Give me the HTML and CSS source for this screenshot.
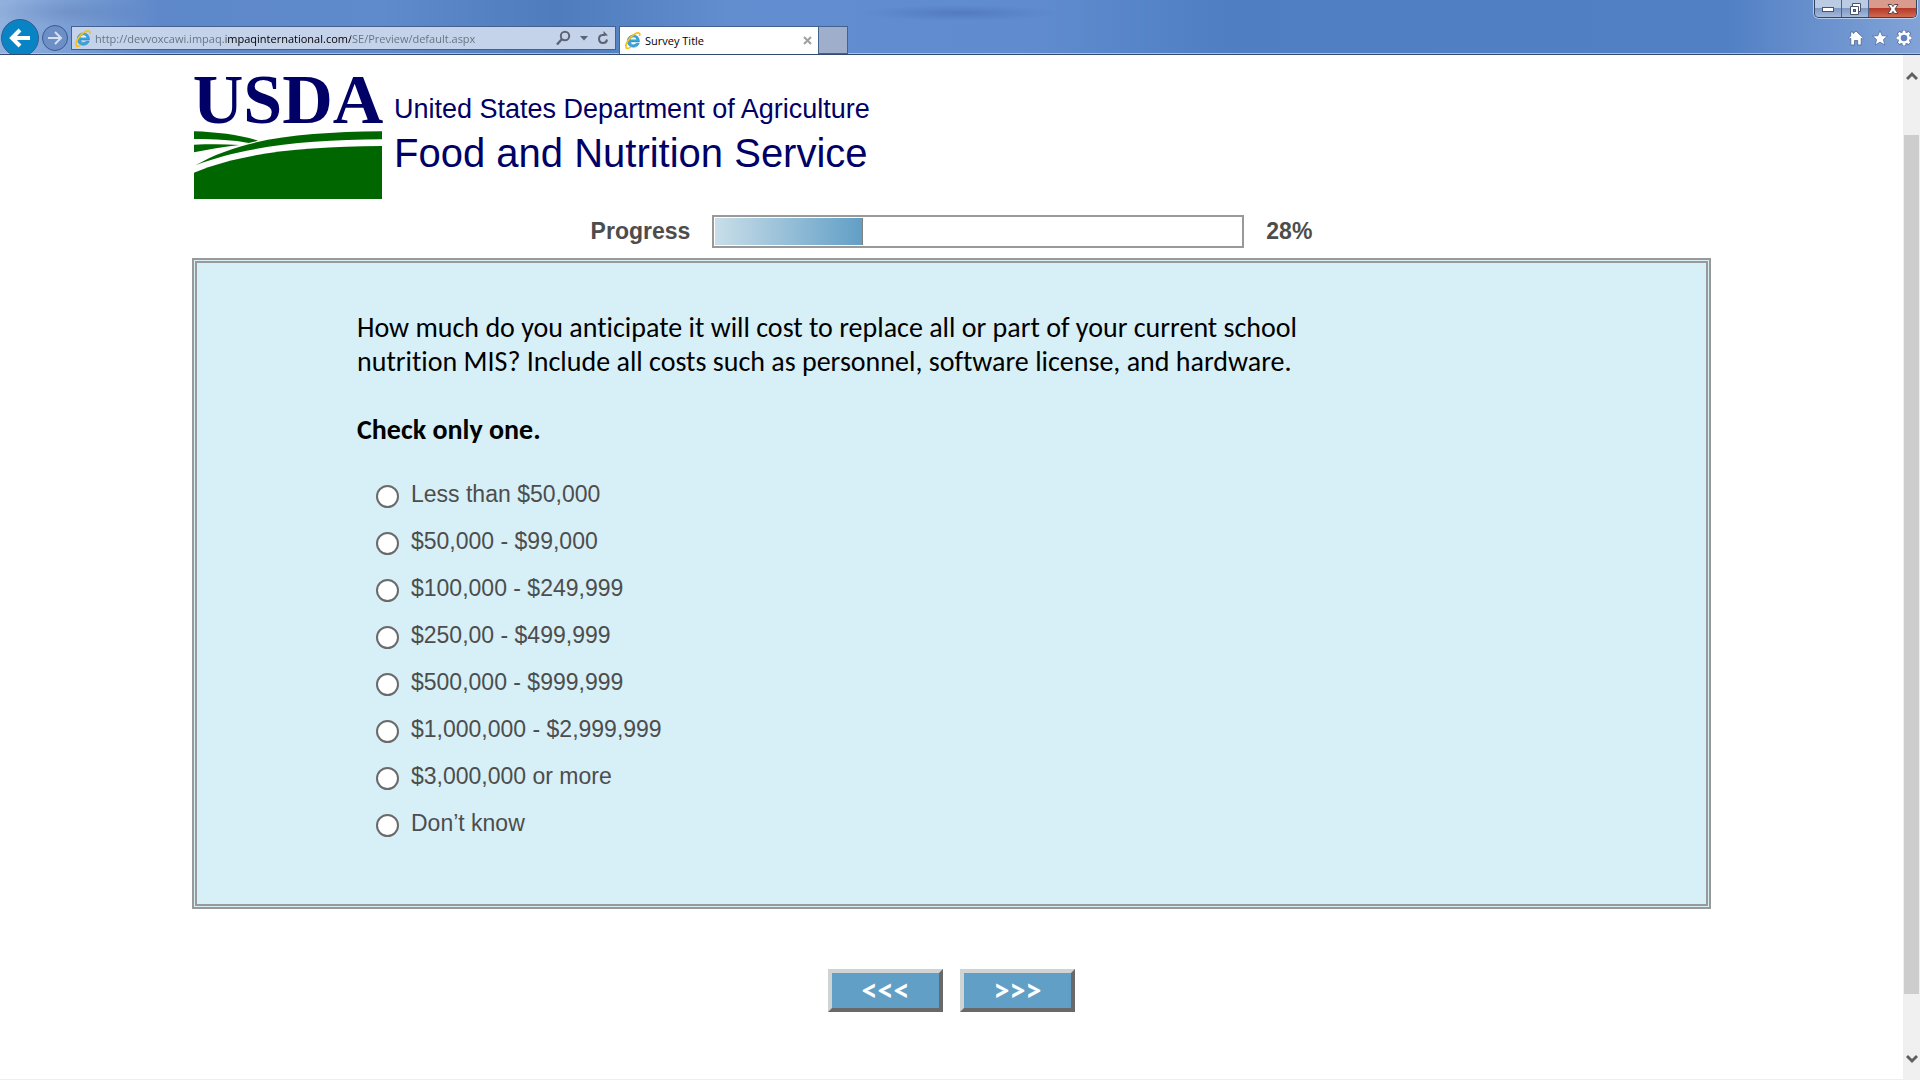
FILE: index.html
```html
<!DOCTYPE html>
<html lang="en">

<head>
  <meta charset="UTF-8">
  <meta name="viewport" content="width=device-width, initial-scale=1.0">
  <title>Survey Title</title>
  <link rel="stylesheet" href="styles.css">
</head>

<body>
  <svg width="0" height="0" class="defs">
    <symbol id="ie" viewBox="0 0 16 16">
      <path d="M13.6 9.3H5.2c.2 3.2 4.2 3.500 5.300 1.400h2.900c-2 5.500-11.200 4.700-11.200-2.200C2.200 1 13.900.5 13.600 9.300z" fill="#3aa5dc" stroke="#1f7fc0" stroke-width=".5"/>
      <path d="M5.300 7.100h5.300c-.2-2.900-4.900-2.900-5.300 0z" fill="#e8f6fd"/>
      <path d="M1.500 15.200C-.8 12.500 4 4.500 9.500 1.700c3-1.500 5-1 4.300 1.400" fill="none" stroke="#f4c01e" stroke-width="1.600" stroke-linecap="round"/>
      <path d="M1.500 15.200c.9.500 2.400 0 3.500-.8" fill="none" stroke="#f4c01e" stroke-width="1.300" stroke-linecap="round"/>
    </symbol>
  </svg>

  <header class="browser">
    <div class="window-buttons">
      <button class="win" aria-label="Minimize">
        <svg width="14" height="8" viewBox="0 0 14 8"><rect x="1.500" y="2.500" width="11" height="4" fill="#fff" stroke="#4a5468"/></svg>
      </button>
      <button class="win" aria-label="Restore">
        <svg width="14" height="14" viewBox="0 0 14 14"><path d="M4.500 1.500h8v8h-2v3h-8v-8h2z" fill="#fff" stroke="#4a5468"/><path d="M4 4.500h6.500V10" fill="none" stroke="#4a5468"/><rect x="5.500" y="7.500" width="2" height="2" fill="#6c82ac" stroke="#4a5468"/></svg>
      </button>
      <button class="win win-close" aria-label="Close">
        <svg width="14" height="12" viewBox="0 0 14 12"><path d="M2 1.500h3.500L7 3.600l1.500-2.100H12L9 6l3 4.500H8.500L7 8.400l-1.500 2.100H2L5 6z" fill="#fff" stroke="#57434c"/></svg>
      </button>
    </div>

    <nav class="bar">
      <button class="round back" aria-label="Back">
        <svg width="24" height="24" viewBox="0 0 24 24"><path d="M12 4l-8 8 8 8M4.500 12H22" fill="none" stroke="#fff" stroke-width="4"/></svg>
      </button>
      <button class="round forward" aria-label="Forward">
        <svg width="16" height="16" viewBox="0 0 16 16"><path d="M8 2l6 6-6 6M1 8h12.500" fill="none" stroke="#d5e0f3" stroke-width="2"/></svg>
      </button>
      <div class="address">
        <svg width="17" height="17"><use href="#ie"/></svg>
        <input class="url" type="text" aria-label="Address" value="http://devvoxcawi.impaq.impaqinternational.com/SE/Preview/default.aspx">
        <button class="tool" aria-label="Search">
          <svg width="15" height="16" viewBox="0 0 15 16"><circle cx="9" cy="6" r="4.200" fill="none" stroke="#5b6472" stroke-width="2"/><path d="M6 9l-5 5.500" stroke="#5b6472" stroke-width="2.400"/></svg>
        </button>
        <button class="tool" aria-label="Search options">
          <svg width="8" height="5" viewBox="0 0 8 5"><path d="M0 0h8L4 4.500z" fill="#5b6472"/></svg>
        </button>
        <button class="tool" aria-label="Refresh">
          <svg width="12" height="14" viewBox="0 0 12 14"><path d="M8 4H5.500a4 4 0 1 0 4.500 4.500" fill="none" stroke="#5b6472" stroke-width="2"/><path d="M6.500 0v4.800L11 4.500z" fill="#5b6472"/></svg>
        </button>
      </div>
      <div class="tab">
        <svg width="17" height="17"><use href="#ie"/></svg>
        <span class="tab-title">Survey Title</span>
        <button class="tool" aria-label="Close tab">
          <svg width="9" height="9" viewBox="0 0 9 9"><path d="M1 1l7 7M8 1L1 8" stroke="#a0a0a0" stroke-width="2"/></svg>
        </button>
      </div>
      <button class="new-tab" aria-label="New tab"></button>
      <div class="bar-icons">
        <button class="tool" aria-label="Home">
          <svg width="16" height="16" viewBox="0 0 16 16"><path d="M8 1l7.300 7-1 1.200-1.100-.9V15H9.700v-4.500H6.500V15H2.800V8.300l-1.100.9L.7 8l2-2V2h2.500v1.600z" fill="#fff" stroke="#4a6596" stroke-width=".8"/></svg>
        </button>
        <button class="tool" aria-label="Favorites">
          <svg width="16" height="16" viewBox="0 0 16 16"><path d="M8 .6l2.100 5.100 5.400.4-4.100 3.500 1.300 5.500L8 12.100l-4.700 3 1.300-5.500L.5 6.100l5.400-.4z" fill="#fff" stroke="#4a6596" stroke-width=".7"/></svg>
        </button>
        <button class="tool" aria-label="Tools">
          <svg width="16" height="16" viewBox="0 0 16 16"><g stroke="#4a6596" stroke-width="4.200"><path d="M8 0v16M0 8h16M2.300 2.300l11.400 11.400M13.700 2.300L2.300 13.700"/></g><g stroke="#fff" stroke-width="2.800"><path d="M8 .5v15M.5 8h15M2.700 2.700l10.600 10.600M13.300 2.700L2.700 13.300"/></g><circle cx="8" cy="8" r="4.500" fill="#5f85c3" stroke="#fff" stroke-width="2.400"/></svg>
        </button>
      </div>
    </nav>
  </header>

  <div class="view">
    <main class="page">
      <div class="brand">
        <svg class="logo" width="192" height="135" viewBox="36 30 576 405">
          <text x="38" y="204" class="logo-text">USDA</text>
          <g fill="#006600">
            <path d="M42 229C110 231 180 240 234 257L206 264C160 255 110 252 42 252z"/>
            <path d="M42 269C90 267 135 267 178 270C130 276 85 283 42 292z"/>
            <path d="M46 331C190 248 370 232 606 229V253C380 254 190 275 46 331z"/>
            <path d="M42 353C180 296 360 274 606 273V432H42z"/>
          </g>
        </svg>
        <div class="brand-names">
          <div class="department">United States Department of Agriculture</div>
          <div class="service">Food and Nutrition Service</div>
        </div>
      </div>

      <div class="progress">
        <span id="progress-label">Progress</span>
        <div class="progress-bar" role="progressbar" aria-labelledby="progress-label" aria-valuenow="28" aria-valuemin="0" aria-valuemax="100">
          <div class="progress-fill" style="width: 28%"></div>
        </div>
        <span>28%</span>
      </div>

      <form class="survey">
        <fieldset class="panel">
          <p class="question" id="question">How much do you anticipate it will cost to replace all or part of your current school nutrition MIS? Include all costs such as personnel, software license, and hardware.</p>
          <p class="question hint">Check only one.</p>
          <div class="options" role="radiogroup" aria-labelledby="question">
            <label class="option"><input type="radio" name="cost" value="1">Less than $50,000</label>
            <label class="option"><input type="radio" name="cost" value="2">$50,000 - $99,000</label>
            <label class="option"><input type="radio" name="cost" value="3">$100,000 - $249,999</label>
            <label class="option"><input type="radio" name="cost" value="4">$250,00 - $499,999</label>
            <label class="option"><input type="radio" name="cost" value="5">$500,000 - $999,999</label>
            <label class="option"><input type="radio" name="cost" value="6">$1,000,000 - $2,999,999</label>
            <label class="option"><input type="radio" name="cost" value="7">$3,000,000 or more</label>
            <label class="option"><input type="radio" name="cost" value="8">Don’t know</label>
          </div>
        </fieldset>
        <div class="buttons">
          <button class="step" type="button">&lt;&lt;&lt;</button>
          <button class="step" type="button">&gt;&gt;&gt;</button>
        </div>
      </form>
    </main>

    <aside class="scrollbar">
      <button class="arrow" aria-label="Scroll up">
        <svg width="12" height="10" viewBox="0 0 12 10"><path d="M1 8l5-5 5 5" fill="none" stroke="#606060" stroke-width="3"/></svg>
      </button>
      <div class="track">
        <div class="thumb"></div>
      </div>
      <button class="arrow" aria-label="Scroll down">
        <svg width="12" height="10" viewBox="0 0 12 10"><path d="M1 2l5 5 5-5" fill="none" stroke="#606060" stroke-width="3"/></svg>
      </button>
    </aside>
  </div>
</body>

</html>
```
FILE: styles.css
```css
*,
*::after,
*::before {
  box-sizing: border-box;
}

body {
  margin: 0;
  min-height: 100vh;
  display: flex;
  flex-direction: column;
  font-family: "Liberation Sans", Arial, sans-serif;
  background-color: #fff;
}

button {
  padding: 0;
  border: none;
  background: none;
  display: flex;
  align-items: center;
  justify-content: center;
}

svg {
  display: block;
  flex: none;
}

.defs {
  position: absolute;
}

/* Browser window */
.browser {
  position: relative;
  height: 55px;
  overflow: hidden;
  border-bottom: 1px solid #34496f;
  box-shadow: inset 0 -1px #a9c0ea;
  /* soft shapes of the window behind the glass */
  background:
    radial-gradient(ellipse 100px 8px at 960px 13px, rgba(50, 85, 150, .3), transparent),
    radial-gradient(ellipse 80px 14px at 70px 12px, rgba(70, 95, 150, .2), transparent),
    linear-gradient(90deg, rgba(190, 212, 240, .55), transparent 160px),
    linear-gradient(90deg, #5c86c8 0%, #5f8acc 20%, #4e7cbc 29%, #628dcf 38%, #608ccf 54%, #4f7ec3 64%, #5280c5 90%, #82a3d7 100%);
}

.bar {
  display: flex;
  align-items: flex-start;
  padding: 19px 8px 0 1px;
}

.round {
  border-radius: 50%;
  border: 1px solid #345c92;
}

.back {
  width: 38px;
  height: 38px;
  background-color: #0884c4;
}

.forward {
  width: 26px;
  height: 26px;
  margin: 6px 3px 0;
  background-color: #6d8fc6;
}

.address {
  display: flex;
  align-items: center;
  gap: 9px;
  width: 545px;
  height: 24px;
  margin-top: 7px;
  padding: 0 6px 0 3px;
  border: 1px solid #45618f;
  background-color: #c4d2ea;
}

.url {
  flex: 1;
  min-width: 0;
  margin-left: -6px;
  padding: 0;
  border: none;
  outline: none;
  font-family: "Open Sans", sans-serif;
  font-size: 11px;
  color: transparent;
  /* the domain is darker than the rest of the address */
  background: linear-gradient(90deg, #65707f 131px, #000 131px, #000 256px, #65707f 256px);
  background-clip: text;
  -webkit-background-clip: text;
}

.tab {
  display: flex;
  align-items: center;
  gap: 3px;
  width: 200px;
  height: 29px;
  margin: 7px 0 0 3px;
  padding: 0 6px 2px 5px;
  border: 1px solid #45618f;
  border-bottom: none;
  background-color: #fff;
}

.tab-title {
  flex: 1;
  font-family: "Open Sans", sans-serif;
  font-size: 11px;
}

.new-tab {
  width: 29px;
  height: 28px;
  margin-top: 7px;
  border: 1px solid #45618f;
  border-left: none;
  background-color: #9eaecb;
}

.bar-icons {
  display: flex;
  gap: 8px;
  margin: 11px 0 0 auto;
}

.window-buttons {
  position: absolute;
  top: 0;
  right: 3px;
  display: flex;
  height: 18px;
  border: 1px solid #35445f;
  border-top: none;
  border-radius: 0 0 5px 5px;
  overflow: hidden;
  box-shadow: 0 0 0 1px rgba(255, 255, 255, .5);
}

.win {
  width: 27px;
  height: 17px;
  border-right: 1px solid #4d6186;
  background: linear-gradient(#bccbe4 45%, #7f99c4 50%, #a4badb);
}

.win-close {
  width: 47px;
  border-right: none;
  background: linear-gradient(#d99b8e 45%, #b63a28 50%, #cf6a50);
}

/* Page */
.view {
  flex: 1;
  display: flex;
}

.page {
  flex: 1;
  padding: 10px 192px 0;
  border-bottom: 1px solid #eee;
}

.brand {
  display: flex;
  gap: 10px;
  color: #000066;
}

.logo {
  overflow: visible;
}

.logo-text {
  font-family: "Liberation Serif", "Times New Roman", serif;
  font-weight: bold;
  font-size: 210px;
  fill: #000066;
}

.brand-names {
  padding-top: 27px;
}

.department {
  font-size: 27px;
  line-height: 34px;
}

.service {
  font-size: 40px;
  line-height: 54px;
}

.progress {
  display: flex;
  align-items: center;
  justify-content: center;
  gap: 22px;
  margin: 15px 0 10px;
  font-size: 23px;
  font-weight: bold;
  color: #4d4d4d;
}

.progress-bar {
  width: 532px;
  height: 33px;
  padding: 1px;
  border: 2px solid #999;
}

.progress-fill {
  height: 27px;
  border-right: 1px solid #808080;
  background: linear-gradient(90deg, #c9dee9, #619fc6);
}

.panel {
  margin: 0;
  min-width: 0;
  padding: 48px 160px 57px;
  border: 5px double #999;
  background-color: #d7eff6;
}

.question {
  max-width: 1000px;
  margin: 0 0 34px;
  font-family: Calibri, Carlito, Lato, sans-serif;
  font-size: 28px;
  line-height: 34px;
  font-variant-ligatures: none;
  color: #000;
}

.hint {
  margin-bottom: 24px;
  font-weight: bold;
}

.options {
  padding-left: 19px;
}

.option {
  display: flex;
  align-items: center;
  gap: 12px;
  height: 47px;
  font-size: 23px;
  color: #4d4d4d;
}

.option input {
  appearance: none;
  width: 23px;
  height: 23px;
  margin: 4px 0 0;
  border: 2px solid #6a6a6a;
  border-radius: 50%;
  background-color: #fff;
}

.option input:checked {
  background: radial-gradient(circle, #333 5px, #fff 6px);
}

.buttons {
  display: flex;
  justify-content: center;
  gap: 17px;
  padding: 60px 0;
}

.step {
  width: 115px;
  height: 43px;
  border: 4px solid;
  border-color: #d0d3d3 #696969 #696969 #d0d3d3;
  background-color: #629fc6;
  font-family: Calibri, Carlito, Lato, sans-serif;
  font-size: 32px;
  font-weight: bold;
  line-height: 34px;
  color: #fff;
}

.scrollbar {
  width: 17px;
  display: flex;
  flex-direction: column;
  background-color: #f0f0f0;
}

.arrow {
  height: 42px;
}

.track {
  flex: 1;
  display: flex;
  flex-direction: column;
  padding: 38px 1px 44px;
}

.thumb {
  flex: 1;
  background-color: #cdcdcd;
}
```
